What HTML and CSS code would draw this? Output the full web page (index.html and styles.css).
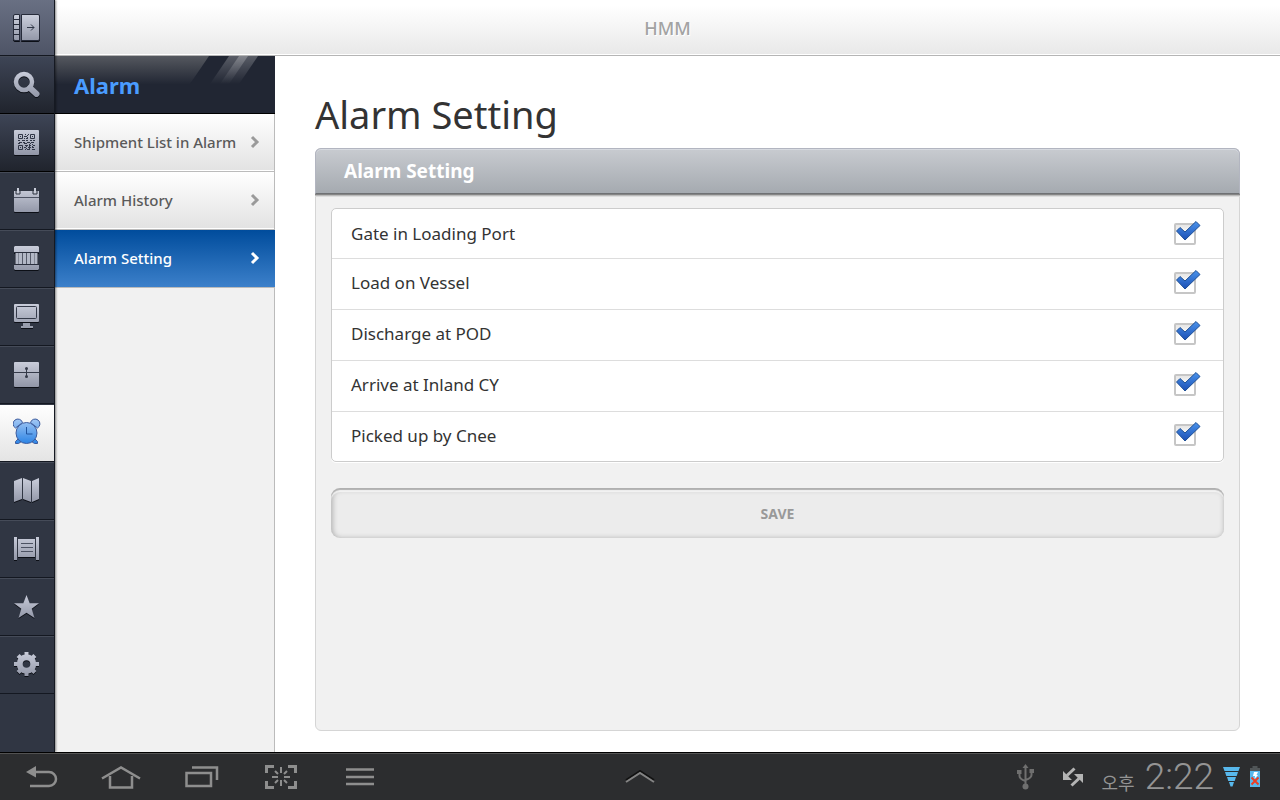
FILE: index.html
```html
<!DOCTYPE html>
<html lang="en">
<head>
    <meta charset="UTF-8">
    <meta name="viewport" content="width=device-width, initial-scale=1.0">
    <title>HMM - Alarm Setting</title>
    <link rel="stylesheet" href="styles.css">
</head>
<body>
    <!-- shared gradients and the tick mark -->
    <svg class="defs" width="0" height="0" aria-hidden="true">
        <defs>
            <linearGradient id="metal" gradientUnits="userSpaceOnUse" x1="0" y1="0" x2="0" y2="28">
                <stop offset="0" stop-color="#cdd1de"/>
                <stop offset="1" stop-color="#8f94a5"/>
            </linearGradient>
            <linearGradient id="blue" gradientUnits="userSpaceOnUse" x1="0" y1="0" x2="0" y2="27">
                <stop offset="0" stop-color="#a9cbf5"/>
                <stop offset="1" stop-color="#2580e4"/>
            </linearGradient>
            <linearGradient id="tick" x1="0" y1="0" x2="0" y2="1">
                <stop offset="0" stop-color="#4a93ec"/>
                <stop offset="1" stop-color="#1b4fb4"/>
            </linearGradient>
            <linearGradient id="shine" x1="0" y1="0" x2="0" y2="1">
                <stop offset="0" stop-color="#fff" stop-opacity="0.25"/>
                <stop offset="1" stop-color="#fff" stop-opacity="0"/>
            </linearGradient>
            <symbol id="check" viewBox="0 0 26 22">
                <path d="M1.500 11L5 7.500L10 12L21 1.500L25 5.500L10 20Z" fill="url(#tick)" stroke="#1d4f95" stroke-width="1"/>
            </symbol>
            <symbol id="chevron" viewBox="0 0 10 14">
                <path d="M2 2L7 7L2 12" fill="none" stroke="currentColor" stroke-width="3"/>
            </symbol>
        </defs>
    </svg>

    <div class="app">
        <nav class="rail" aria-label="Main">
            <a class="rail-item top" href="#" aria-label="Toggle menu">
                <svg viewBox="0 0 28 28">
                    <path d="M2 .5h4.500v26H2a1.500 1.500 0 0 1-1.500-1.500V2A1.500 1.500 0 0 1 2 .5zM8.500 .5H25A1.500 1.500 0 0 1 26.500 2v23a1.500 1.500 0 0 1-1.500 1.500H8.500z" fill="url(#metal)" stroke="#262b3a"/>
                    <path d="M1 5.500h5M1 10.500h5M1 15.500h5M1 20.500h5" stroke="#262b3a"/>
                    <path d="M14 13.500h7M18 10.500l3 3l-3 3" fill="none" stroke="#303747"/>
                </svg>
            </a>
            <a class="rail-item dark" href="#" aria-label="Search">
                <svg viewBox="0 0 28 28">
                    <g fill="none" stroke="url(#metal)">
                        <circle cx="11" cy="12" r="8" stroke-width="4.500"/>
                        <path d="M17 18L23.500 24" stroke-width="6" stroke-linecap="round"/>
                    </g>
                </svg>
            </a>
            <a class="rail-item dark" href="#" aria-label="QR code">
                <svg viewBox="0 0 28 28">
                    <rect x="1" y="2" width="25" height="25" rx="1" fill="url(#metal)"/>
                    <g fill="none" stroke="#303646">
                        <path d="M5.500 6.500h4v4h-4zM17.500 6.500h4v4h-4zM5.500 17.500h4v4h-4z"/>
                        <path d="M12 6.500h1m2 0h1M11 8.500h3M13 10.500h2M5 12.500h2m2 0h3m1 0h2m2 0h2m1 0h2M6 14.500h3m1 0h2m2 0h3m1 0h3M5 15.500h2m4 0h3m3 0h1M12 17.500h3m1 0h2m2 0h2M11 19.500h2m2 0h3m1 0h2M12 21.500h1m1 0h3m2 0h3"/>
                        <path d="M14.500 7v3M11.500 10v3M19.500 16v3M16.500 16v6M13.500 18v3" stroke-dasharray="1 1"/>
                    </g>
                    <path d="M7 8h1v1h-1zM19 8h1v1h-1zM7 19h1v1h-1z" fill="#303646"/>
                </svg>
            </a>
            <a class="rail-item" href="#" aria-label="Schedule">
                <svg viewBox="0 0 28 28">
                    <path d="M1 5h25v20a1 1 0 0 1-1 1H2a1 1 0 0 1-1-1z" fill="url(#metal)"/>
                    <path d="M1 11.500h25" stroke="#4c5262"/>
                    <path d="M3 4v4h4V4M20 4v4h4V4" fill="none" stroke="#303643"/>
                    <path d="M5 2v5M22 2v5" stroke="#c9cdd9" stroke-width="2"/>
                </svg>
            </a>
            <a class="rail-item" href="#" aria-label="Container">
                <svg viewBox="0 0 28 28">
                    <path d="M2 2h23l1 1v5H1V3zM1 21h25v4l-1 1H2l-1-1z" fill="url(#metal)"/>
                    <path d="M3 8h21v12H3z" fill="#555a69"/>
                    <path d="M4 8v12M7.500 8v12M11.500 8v12M15.500 8v12M19.500 8v12M23 8v12" stroke="#b3b8c6" stroke-width="3"/>
                    <path d="M1 8.500h25M1 20.500h25" stroke="#2a2f3d"/>
                </svg>
            </a>
            <a class="rail-item" href="#" aria-label="Monitor">
                <svg viewBox="0 0 28 28">
                    <rect x="1" y="2" width="25" height="18" rx="1" fill="url(#metal)"/>
                    <rect x="3.500" y="4.500" width="20" height="12" rx="1" fill="none" stroke="#343a49"/>
                    <path d="M10 21h7v3h3v2H8v-2h2z" fill="#989dac"/>
                </svg>
            </a>
            <a class="rail-item" href="#" aria-label="Cargo box">
                <svg viewBox="0 0 28 28">
                    <rect x="1" y="2" width="25" height="25" rx="1" fill="url(#metal)"/>
                    <path d="M1 12.500h25M13.500 8v9" stroke="#343a49"/>
                    <circle cx="13.500" cy="8.500" r="1.500" fill="#343a49"/>
                    <circle cx="13.500" cy="16.500" r="1.500" fill="#343a49"/>
                </svg>
            </a>
            <a class="rail-item current" href="#" aria-label="Alarm" aria-current="page">
                <svg viewBox="0 0 28 28">
                    <g fill="url(#blue)" stroke="#3d5c9e">
                        <path d="M5 21l-2.500 2.500v2h3l3-2zM22 21l2.500 2.500v2h-3l-3-2z"/>
                        <circle cx="13.500" cy="15" r="10.500"/>
                        <path d="M2.500 10A4.800 4.800 0 1 1 9.500 4.500zM24.500 10A4.800 4.800 0 1 0 17.500 4.500z"/>
                    </g>
                    <path d="M13.500 9v7h6" fill="none" stroke="#20549f"/>
                </svg>
            </a>
            <a class="rail-item" href="#" aria-label="Map">
                <svg viewBox="0 0 28 28">
                    <path d="M1 5l8-3v21l-8 3zM10 2l8 3v21l-8-3zM19 5l7-3v21l-7 3z" fill="url(#metal)"/>
                </svg>
            </a>
            <a class="rail-item" href="#" aria-label="Documents">
                <svg viewBox="0 0 28 28">
                    <path d="M1 3h3v23H1zM23 3h3v23h-3zM5 5h17v18H5z" fill="url(#metal)"/>
                    <path d="M8 9.500h12M8 13.500h12M8 17.500h12" stroke="#4c5262"/>
                </svg>
            </a>
            <a class="rail-item" href="#" aria-label="Favorites">
                <svg viewBox="0 0 28 28">
                    <path d="M13.500 3l3.200 8.200H26l-7.300 5.500L21.500 26l-8-5.300l-8 5.300l2.800-9.300L1 11.200h9.300z" fill="url(#metal)"/>
                </svg>
            </a>
            <a class="rail-item" href="#" aria-label="Settings">
                <svg viewBox="0 0 28 28">
                    <circle cx="13.500" cy="14" r="6.800" fill="none" stroke="url(#metal)" stroke-width="6"/>
                    <path d="M11.500 2h4v4h-4zM11.500 22h4v4h-4zM1 12h4v4H1zM22 12h4v4h-4zM3.600 7l3-3l3 3l-3 3zM17.400 7l3-3l3 3l-3 3zM3.600 21l3-3l3 3l-3 3zM17.400 21l3-3l3 3l-3 3z" fill="url(#metal)"/>
                </svg>
            </a>
        </nav>

        <div class="content">
            <header class="topbar">HMM</header>
            <div class="columns">
                <aside class="submenu">
                    <h2 class="submenu-title">
                        <svg class="stripes" viewBox="0 0 90 28" aria-hidden="true">
                            <path d="M24 0H90V28H5z" fill="#212633"/>
                            <path d="M44 0H73L54 28H25z" fill="url(#shine)"/>
                            <path d="M54 0H63L44 28H35z" fill="url(#shine)"/>
                        </svg>
                        <span>Alarm</span>
                    </h2>
                    <a class="submenu-item" href="#">Shipment List in Alarm <svg class="arrow"><use href="#chevron"/></svg></a>
                    <a class="submenu-item" href="#">Alarm History <svg class="arrow"><use href="#chevron"/></svg></a>
                    <a class="submenu-item selected" href="#">Alarm Setting <svg class="arrow"><use href="#chevron"/></svg></a>
                </aside>

                <main class="main">
                    <h1>Alarm Setting</h1>
                    <form class="panel">
                        <h3 class="panel-head">Alarm Setting</h3>
                        <div class="panel-body">
                            <div class="options">
                                <label class="option">Gate in Loading Port
                                    <span class="box"><input type="checkbox" checked><svg><use href="#check"/></svg></span>
                                </label>
                                <label class="option">Load on Vessel
                                    <span class="box"><input type="checkbox" checked><svg><use href="#check"/></svg></span>
                                </label>
                                <label class="option">Discharge at POD
                                    <span class="box"><input type="checkbox" checked><svg><use href="#check"/></svg></span>
                                </label>
                                <label class="option">Arrive at Inland CY
                                    <span class="box"><input type="checkbox" checked><svg><use href="#check"/></svg></span>
                                </label>
                                <label class="option">Picked up by Cnee
                                    <span class="box"><input type="checkbox" checked><svg><use href="#check"/></svg></span>
                                </label>
                            </div>
                            <button class="save" type="button">SAVE</button>
                        </div>
                    </form>
                </main>
            </div>
        </div>
    </div>

    <footer class="sysbar">
        <div class="sys-left">
            <button class="sys-btn" type="button" aria-label="Back">
                <svg viewBox="0 0 40 24">
                    <path d="M11 7H28a7 7 0 0 1 0 14H9" fill="none" stroke="#8e8e8e" stroke-width="2.500"/>
                    <path d="M5 7L15 1V12.500z" fill="#8e8e8e"/>
                </svg>
            </button>
            <button class="sys-btn" type="button" aria-label="Home">
                <svg viewBox="0 0 40 24">
                    <g fill="none" stroke="#8e8e8e" stroke-width="2.500">
                        <path d="M1 13.500L20 2.500L39 13.500"/>
                        <path d="M9 11V22.500H31V11"/>
                    </g>
                </svg>
            </button>
            <button class="sys-btn" type="button" aria-label="Recent apps">
                <svg viewBox="0 0 40 24">
                    <g fill="none" stroke="#8e8e8e" stroke-width="2.500">
                        <path d="M5.500 8H30V21H5.500z"/>
                        <path d="M11 2.500H36V15"/>
                    </g>
                </svg>
            </button>
            <button class="sys-btn" type="button" aria-label="Screen capture">
                <svg viewBox="0 0 40 24">
                    <g fill="none" stroke="#8e8e8e">
                        <path d="M5.500 8V1.500H13M27 1.500H34.500V8M34.500 16V22.500H27M13 22.500H5.500V16" stroke-width="3"/>
                        <path d="M20 2v6M20 15v6M11 12h6M23 12h6M14 6l3 3M26 6l-3 3M14 18l3-3M26 18l-3-3" stroke-width="2"/>
                    </g>
                </svg>
            </button>
            <button class="sys-btn" type="button" aria-label="Menu">
                <svg viewBox="0 0 40 24">
                    <path d="M5 4.500H33M5 12H33M5 19H33" stroke="#8e8e8e" stroke-width="2.500"/>
                </svg>
            </button>
        </div>
        <button class="sys-up" type="button" aria-label="Show tray">
            <svg viewBox="0 0 30 14">
                <path d="M1 10L15 1L29 10" fill="none" stroke="#111" stroke-width="2"/>
                <path d="M1 12L15 3L29 12" fill="none" stroke="#848484" stroke-width="2"/>
            </svg>
        </button>
        <div class="sys-right">
            <svg class="usb" viewBox="0 0 17 26">
                <g fill="none" stroke="#6f6f6f" stroke-width="2">
                    <path d="M8.500 3V22M2.500 8v4q0 3 6 5M14.500 7v4q0 3-6 5"/>
                </g>
                <path d="M8.500 0l3 4h-6zM0 6h4.500v4H0zM12.500 5H17v4h-4.500z" fill="#6f6f6f"/>
                <circle cx="8.500" cy="22.500" r="3" fill="#6f6f6f"/>
            </svg>
            <svg class="sync" viewBox="0 0 20 20">
                <path d="M11.500 1.500L4 8.500M8.500 18.500L16 11.500" stroke="#b4b4b4" stroke-width="3"/>
                <path d="M0 4V13H9zM20 16V7H11z" fill="#b4b4b4"/>
            </svg>
            <span class="ampm" lang="ko">오후</span>
            <span class="time">2:22</span>
            <svg class="wifi" viewBox="0 0 17 20">
                <path d="M0 0H17L15.500 4H1.500zM2 5H15L13.700 9H3.300zM4 10H13L11.700 14H5.300zM6 15H11L9.500 19.500H7.500z" fill="#58b8ec"/>
            </svg>
            <svg class="battery" viewBox="0 0 10 21">
                <path d="M2.500 0h5v2h2.500v3H0V2h2.500z" fill="#515658"/>
                <path d="M0 5H10V21H0z" fill="#58b8ec"/>
                <path d="M4 6h4l-1.500 3H8l-3.500 4l.5-3H3z" fill="#fff"/>
                <path d="M1.500 11.500l7 7M8.500 11.500l-7 7" stroke="#ee3d22" stroke-width="2"/>
            </svg>
        </div>
    </footer>
</body>
</html>
```
FILE: styles.css
```css
* {
    box-sizing: border-box;
}

body {
    margin: 0;
    min-height: 100vh;
    display: flex;
    flex-direction: column;
    background: #fff;
    color: #333;
    font-family: "Noto Sans", "Open Sans", sans-serif;
}

h1, h2, h3 {
    margin: 0;
}

a {
    color: inherit;
    text-decoration: none;
}

button {
    font-family: inherit;
    border: 0;
    padding: 0;
    background: none;
    cursor: pointer;
}

.defs {
    position: absolute;
}

.app {
    flex: 1;
    display: flex;
}

/* icon rail */
.rail {
    width: 55px;
    background: #303643;
    border-right: 1px solid #151922;
    box-shadow: 1px 0 2px rgba(0, 0, 0, 0.45);
    position: relative;
    z-index: 1;
}

.rail-item {
    display: block;
    height: 58px;
    padding: 14px 0 0 13px;
    border-bottom: 1px solid #141821;
    box-shadow: inset 0 1px #454b58;
}

.rail-item svg {
    display: block;
    width: 28px;
    height: 28px;
    filter: drop-shadow(0 1px 0 #0c0f16);
}

.rail-item.top {
    height: 56px;
    background: linear-gradient(#697083, #4e5466);
    box-shadow: none;
}

.rail-item.dark {
    background: linear-gradient(#3e4556, #20242d);
    border-bottom-color: #000;
}

.rail-item.current {
    background: linear-gradient(#fff, #e4e4e4);
    box-shadow: inset 0 1px #303643;
}

.rail-item.current svg {
    filter: none;
}

.content {
    flex: 1;
    display: flex;
    flex-direction: column;
}

.topbar {
    height: 56px;
    line-height: 56px;
    text-align: center;
    font-size: 18px;
    font-weight: 500;
    color: #a3a3a3;
    text-shadow: 1px 1px #fff;
    background: linear-gradient(#fff 10%, #e8e8e8);
    border-bottom: 1px solid #b5b5b5;
    box-shadow: inset 0 -1px #fff;
}

.columns {
    flex: 1;
    display: flex;
}

/* second level menu */
.submenu {
    width: 220px;
    background: #f1f1f1;
    box-shadow: inset -1px 0 #bbb;
}

.submenu-title {
    position: relative;
    height: 58px;
    line-height: 58px;
    padding-left: 19px;
    font-size: 22px;
    color: #4a9cff;
    background: linear-gradient(#55585f, #212633 50%);
    border-bottom: 1px solid #000;
}

.stripes {
    position: absolute;
    top: 0;
    right: 0;
    width: 90px;
    height: 28px;
}

.submenu-item {
    display: flex;
    align-items: center;
    justify-content: space-between;
    height: 58px;
    padding: 0 15px 1px 19px;
    font-size: 15px;
    font-weight: 500;
    color: #5a5a5a;
    background: linear-gradient(#fff, #e2e2e2);
    border-bottom: 1px solid #bbb;
    box-shadow: inset -1px 0 #bbb, inset 0 -1px #fff;
}

.submenu-item.selected {
    color: #fff;
    background: linear-gradient(#004c9c, #3c80ca);
    box-shadow: none;
}

.arrow {
    width: 10px;
    height: 14px;
    color: #9a9a9a;
}

.selected .arrow {
    color: #fff;
}

.main {
    flex: 1;
    display: flex;
    flex-direction: column;
    padding: 32px 40px 21px;
}

h1 {
    font-size: 38px;
    line-height: 52px;
    font-weight: 400;
    margin-bottom: 8px;
}

.panel {
    flex: 1;
    background: #f1f1f1;
    border: 1px solid #d5d5d5;
    border-radius: 6px;
}

.panel-head {
    height: 46px;
    line-height: 45px;
    margin: -1px -1px 0;
    padding-left: 28px;
    font-size: 19px;
    color: #fff;
    background: linear-gradient(#c8cbd0, #a5aab0);
    border: 1px solid #b2b5c0;
    border-bottom: 1px solid #6f7174;
    border-radius: 6px 6px 0 0;
    box-shadow: inset 0 1px #d7dae0, 0 1px #858585, 0 2px #bbb, 0 3px #ddd;
}

.panel-body {
    padding: 14px 15px;
}

.options {
    background: #fff;
    border: 1px solid #ccc;
    border-radius: 5px;
    box-shadow: 0 1px #fff;
}

.option {
    display: flex;
    align-items: center;
    justify-content: space-between;
    height: 51px;
    padding: 0 27px 3px 19px;
    font-size: 17px;
    border-bottom: 1px solid #ddd;
}

.option:first-child {
    height: 50px;
    padding-bottom: 0;
}

.option:last-child {
    height: 49px;
    border-bottom: 0;
}

.box {
    position: relative;
    width: 22px;
    height: 22px;
}

.box input {
    appearance: none;
    display: block;
    width: 22px;
    height: 22px;
    margin: 0;
    border: 2px solid #c6c6c6;
    border-radius: 2px;
    background: linear-gradient(#e6e6e6, #fff 60%);
}

.box svg {
    display: none;
    position: absolute;
    left: 1px;
    top: -3px;
    width: 26px;
    height: 22px;
    pointer-events: none;
}

.box input:checked + svg {
    display: block;
}

.save {
    display: block;
    width: 100%;
    height: 50px;
    margin-top: 26px;
    font-size: 14px;
    font-weight: 700;
    color: #999;
    background: #ececec;
    border-radius: 9px;
    box-shadow: inset 0 2px 1px #b0b0b0, inset 0 4px 1px #f4f4f4, inset 1px 1px 5px 1px #b5b5b5;
}

/* device bar */
.sysbar {
    display: grid;
    grid-template-columns: 1fr auto 1fr;
    align-items: center;
    height: 48px;
    background: #2c2d2f;
    border-top: 1px solid #000;
    box-shadow: inset 0 1px #555;
}

.sys-left {
    display: flex;
    padding-left: 1px;
}

.sys-btn {
    width: 80px;
    height: 46px;
}

.sys-btn svg {
    display: block;
    width: 40px;
    height: 24px;
    margin: 0 auto;
}

.sys-up svg {
    display: block;
    width: 30px;
    height: 14px;
}

.sys-right {
    display: flex;
    align-items: center;
    justify-content: flex-end;
    padding-right: 20px;
    color: #949494;
}

.usb {
    width: 17px;
    height: 26px;
    margin-right: 29px;
}

.sync {
    width: 20px;
    height: 20px;
    margin-right: 19px;
}

.ampm {
    font-family: "Noto Sans CJK KR", sans-serif;
    font-size: 18px;
    line-height: 24px;
    margin: 10px 10px 0 0;
}

.time {
    font-family: Roboto, sans-serif;
    font-size: 37px;
    line-height: 46px;
    font-weight: 300;
    margin-right: 9px;
}

.wifi {
    width: 17px;
    height: 20px;
    margin-right: 10px;
}

.battery {
    width: 10px;
    height: 21px;
}
```
